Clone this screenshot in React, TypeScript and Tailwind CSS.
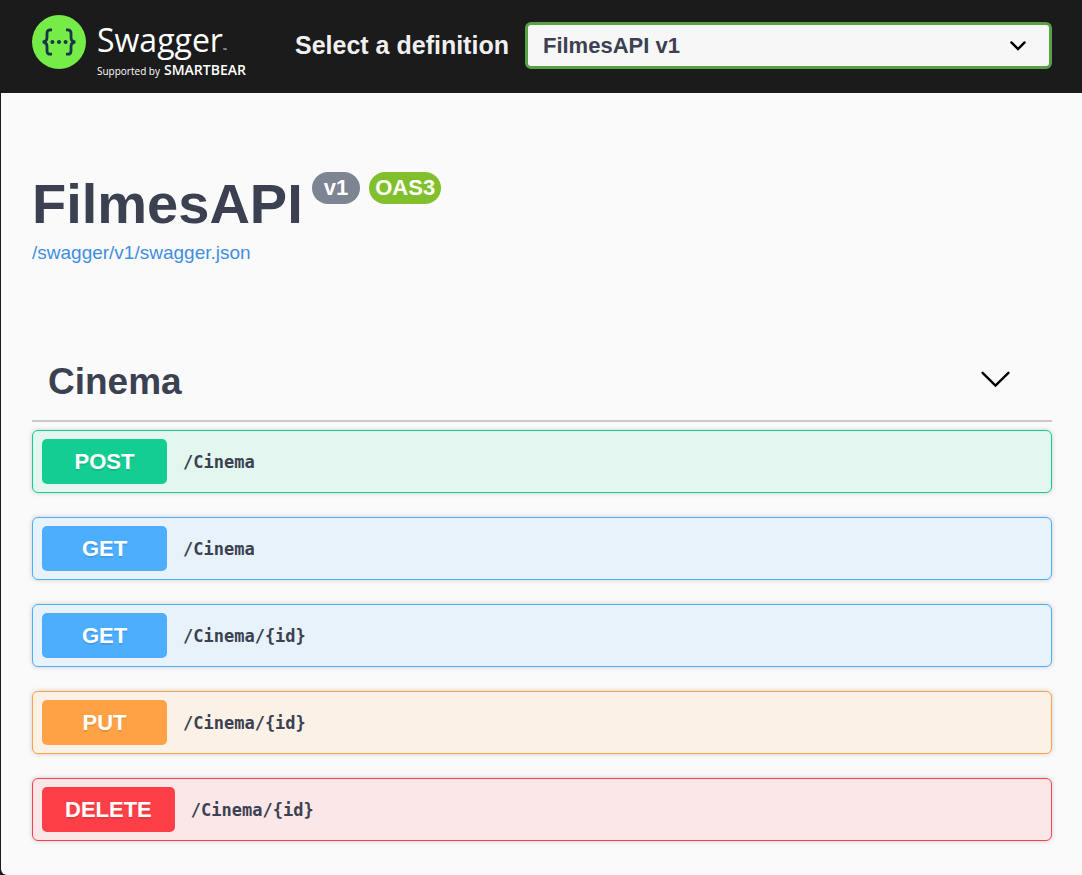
const operations = [
  { method: "POST", path: "/Cinema", row: "border-[#13cd93] bg-[#e3f6ef]", badge: "bg-[#13cd93]" },
  { method: "GET", path: "/Cinema", row: "border-[#4daefe] bg-[#e7f2fb]", badge: "bg-[#4daefe]" },
  { method: "GET", path: "/Cinema/{id}", row: "border-[#4daefe] bg-[#e7f2fb]", badge: "bg-[#4daefe]" },
  { method: "PUT", path: "/Cinema/{id}", row: "border-[#ffa245] bg-[#fbf1e6]", badge: "bg-[#ffa245]" },
  { method: "DELETE", path: "/Cinema/{id}", row: "border-[#ff3f47] bg-[#fbe7e8]", badge: "bg-[#ff3f47]" },
];

function SwaggerMark() {
  return (
    <svg viewBox="0 0 54 54" className="size-[54px] shrink-0" aria-hidden="true">
      <circle cx="27" cy="27" r="27" fill="#75ec48" />
      <g fill="none" stroke="#173647" strokeWidth="2.8">
        <path d="M20 14.8h-1.6c-2.4 0-3.4 1.1-3.4 3.3v4.2c0 3-1 4.5-4.4 4.7 3.4.2 4.4 1.7 4.4 4.7v4.2c0 2.2 1 3.3 3.4 3.3H20" />
        <path d="M34 14.8h1.6c2.4 0 3.4 1.1 3.4 3.3v4.2c0 3 1 4.5 4.4 4.7-3.4.2-4.4 1.7-4.4 4.7v4.2c0 2.2-1 3.3-3.4 3.3H34" />
      </g>
      <g fill="#173647">
        <circle cx="20.4" cy="27" r="2" />
        <circle cx="27" cy="27" r="2" />
        <circle cx="33.6" cy="27" r="2" />
      </g>
    </svg>
  );
}

function TopBar() {
  return (
    <header className="flex h-[93px] items-start bg-[#1b1b1b] pr-[30px] pl-[31px]">
      <a href="#" className="mt-[15px] flex w-[263px] shrink-0 gap-[11px] font-['Open_Sans',sans-serif] text-white">
        <SwaggerMark />
        <span className="flex flex-col gap-1 pt-[7px] whitespace-nowrap">
          <span className="flex items-end text-[32px] leading-9 font-normal">
            Swagger
            <span className="text-[5px] leading-4">™</span>
          </span>
          <span className="flex items-baseline gap-1 text-[10px] leading-4">
            Supported by
            <span className="text-[14px] font-semibold">SMARTBEAR</span>
          </span>
        </span>
      </a>
      <div className="mt-[22px] flex min-w-0 flex-1 items-center gap-4">
        <label htmlFor="definition" className="shrink-0 pb-0.5 text-[25px] leading-8 font-bold text-[#f0f0f0]">
          Select a definition
        </label>
        <div className="grid min-w-0 flex-1 items-center">
          <select
            id="definition"
            className="col-start-1 row-start-1 h-[47px] w-full appearance-none rounded-md border-3 border-[#58a144] bg-[#f7f7f7] px-[15px] text-[22px] font-bold text-[#3b4151]"
          >
            <option>FilmesAPI v1</option>
          </select>
          <svg
            viewBox="0 0 16 10"
            className="pointer-events-none col-start-1 row-start-1 mr-[26px] h-2.5 w-4 justify-self-end"
            aria-hidden="true"
          >
            <path d="M1.4 1.4 8 8l6.6-6.6" fill="none" stroke="#000" strokeWidth="2.4" strokeLinecap="round" />
          </svg>
        </div>
      </div>
    </header>
  );
}

export default function App() {
  return (
    <div className="min-h-screen bg-[#1b1b1b] pl-px font-['Liberation_Sans',Arial,sans-serif] text-[#3b4151]">
      <TopBar />
      <main className="min-h-[calc(100vh-93px)] rounded-bl-md bg-[#fafafa] pt-[79px] pr-[30px] pb-8 pl-[31px]">
        <div className="flex items-start gap-[9px]">
          <h1 className="text-[56px] leading-16 font-bold">FilmesAPI</h1>
          <span className="rounded-full bg-[#7d8492] px-3 text-[22px] leading-8 font-bold text-white">v1</span>
          <span className="rounded-full bg-[#81bf2d] px-1.5 text-[22px] leading-8 font-bold text-white">OAS3</span>
        </div>
        <a href="#" className="mt-[5px] block w-fit text-[19px] leading-6 text-[#3f8fdf]">
          /swagger/v1/swagger.json
        </a>
        <section className="mt-[77px]">
          <h2 className="border-b-2 border-[#c8c9cb]">
            <button type="button" aria-expanded="true" className="flex h-[78px] w-full items-center justify-between pr-[42px] pl-4">
              <span className="pt-0.5 text-[37px] font-bold">Cinema</span>
              <svg viewBox="0 0 29 17" className="mb-1 h-[17px] w-[29px]" aria-hidden="true">
                <path d="M1.6 1.8 14.5 14.6 27.4 1.8" fill="none" stroke="#000" strokeWidth="2.4" strokeLinecap="round" />
              </svg>
            </button>
          </h2>
          <ul className="mt-2 flex flex-col gap-6">
            {operations.map((op) => (
              <li key={op.method + op.path}>
                <button
                  type="button"
                  className={`flex w-full items-center gap-4 rounded-md border py-2 pr-2 pl-[9px] text-left shadow-[0_0_5px_rgba(0,0,0,0.19)] ${op.row}`}
                >
                  <span
                    className={`min-w-[125px] rounded-[5px] px-[23px] text-center text-[22px] leading-[45px] font-bold text-white [text-shadow:0_2px_0_rgba(0,0,0,0.1)] ${op.badge}`}
                  >
                    {op.method}
                  </span>
                  <span className="pt-0.5 font-['DejaVu_Sans_Mono',monospace] text-[17px] font-bold">{op.path}</span>
                </button>
              </li>
            ))}
          </ul>
        </section>
      </main>
    </div>
  );
}
